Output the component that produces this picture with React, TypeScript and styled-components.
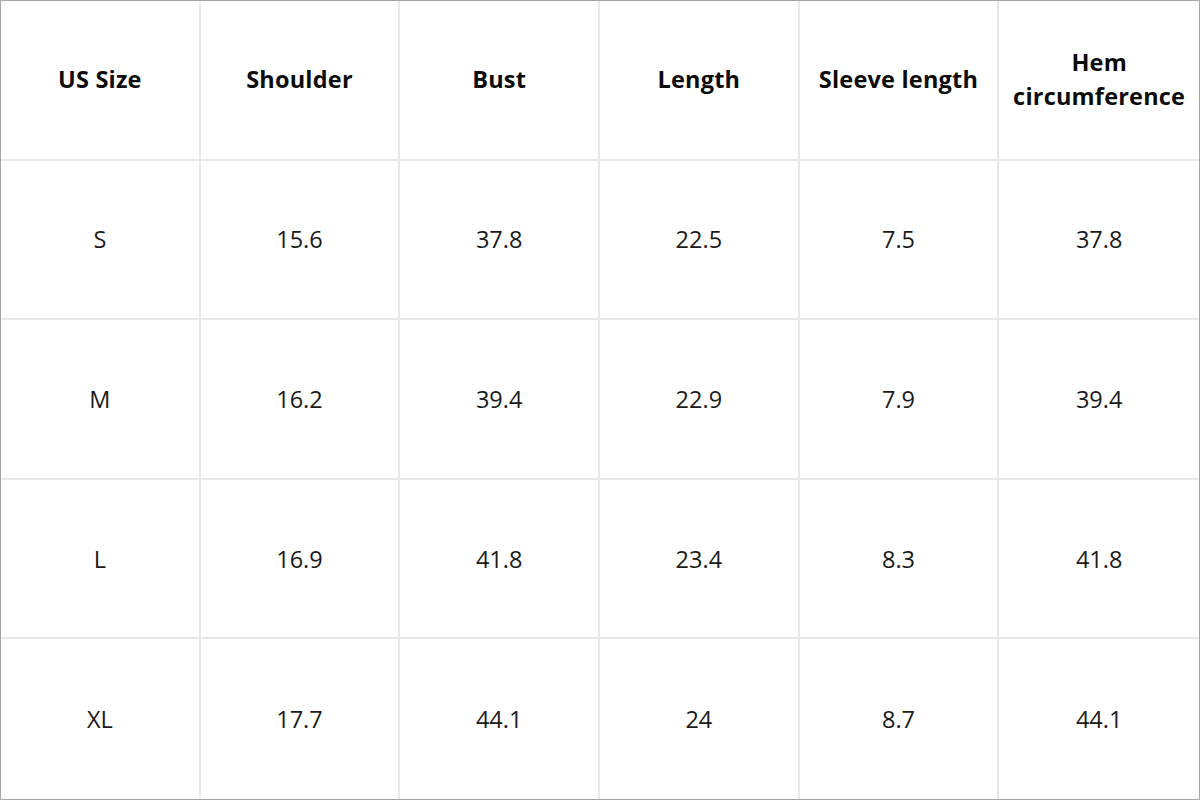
import React from "react";
import styled, {createGlobalStyle} from "styled-components";

const GlobalStyle = createGlobalStyle`
    html, body {
        margin: 0;
        padding: 0;
        background: #ffffff;
    }
    body {
        font-family: "Open Sans", "Liberation Sans", sans-serif;
        color: #111111;
    }
`;

const Table = styled.div`
    box-sizing: border-box;
    width: 1200px;
    height: 800px;
    border: 1px solid #a6a6a6;
    display: grid;
    grid-template-columns: repeat(6, 1fr);
    grid-template-rows: repeat(5, 1fr);
`;

const Cell = styled.div<{ $head?: boolean; $lastCol?: boolean; $lastRow?: boolean }>`
    display: flex;
    align-items: center;
    justify-content: center;
    text-align: center;
    border-right: ${(p) => (p.$lastCol ? "none" : "2px solid #e8e8e8")};
    border-bottom: ${(p) => (p.$lastRow ? "none" : "2px solid #e8e8e8")};
    font-size: 23.5px;
    line-height: 34px;
    font-weight: ${(p) => (p.$head ? 700 : 400)};
    color: ${(p) => (p.$head ? "#0c0c0c" : "#1a1a1a")};
    padding: ${(p) => (p.$head ? "0 2px 2px" : "0 2px")};
    letter-spacing: ${(p) => (p.$head ? "0.2px" : "0")};
`;

const headers = ["US Size", "Shoulder", "Bust", "Length", "Sleeve length", "Hem circumference"];

const rows = [
    ["S", "15.6", "37.8", "22.5", "7.5", "37.8"],
    ["M", "16.2", "39.4", "22.9", "7.9", "39.4"],
    ["L", "16.9", "41.8", "23.4", "8.3", "41.8"],
    ["XL", "17.7", "44.1", "24", "8.7", "44.1"],
];

export default function App() {
    return (
        <>
            <GlobalStyle/>
            <Table>
                {headers.map((h, i) => (
                    <Cell key={h} $head $lastCol={i === headers.length - 1}>{h}</Cell>
                ))}
                {rows.map((row, r) =>
                    row.map((v, c) => (
                        <Cell key={`${r}-${c}`} $lastCol={c === row.length - 1} $lastRow={r === rows.length - 1}>
                            {v}
                        </Cell>
                    ))
                )}
            </Table>
        </>
    );
}
